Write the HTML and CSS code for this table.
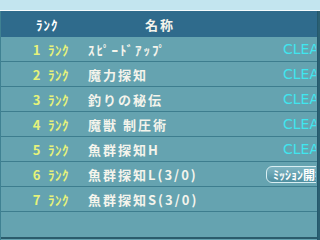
FILE: index.html
```html
<!DOCTYPE html>
<html lang="ja">
<head>
    <meta charset="UTF-8">
    <title>ランク一覧</title>
    <link rel="stylesheet" href="styles.css">
</head>
<body>

    <div id="rank-panel">
        <div class="top-strip"></div>

        <div class="rank-table">
            <div class="row head">
                <div class="col-rank">ﾗﾝｸ</div>
                <div class="col-name">名称</div>
                <div class="col-state"></div>
            </div>
            <div class="row">
                <div class="col-rank"><span class="num">1</span>ﾗﾝｸ</div>
                <div class="col-name">ｽﾋﾟｰﾄﾞｱｯﾌﾟ</div>
                <div class="col-state"><span class="clear">CLEAR</span></div>
            </div>
            <div class="row">
                <div class="col-rank"><span class="num">2</span>ﾗﾝｸ</div>
                <div class="col-name">魔力探知</div>
                <div class="col-state"><span class="clear">CLEAR</span></div>
            </div>
            <div class="row">
                <div class="col-rank"><span class="num">3</span>ﾗﾝｸ</div>
                <div class="col-name">釣りの秘伝</div>
                <div class="col-state"><span class="clear">CLEAR</span></div>
            </div>
            <div class="row">
                <div class="col-rank"><span class="num">4</span>ﾗﾝｸ</div>
                <div class="col-name">魔獣 制圧術</div>
                <div class="col-state"><span class="clear">CLEAR</span></div>
            </div>
            <div class="row">
                <div class="col-rank"><span class="num">5</span>ﾗﾝｸ</div>
                <div class="col-name">魚群探知H</div>
                <div class="col-state"><span class="clear">CLEAR</span></div>
            </div>
            <div class="row">
                <div class="col-rank"><span class="num">6</span>ﾗﾝｸ</div>
                <div class="col-name">魚群探知L(3/0)</div>
                <div class="col-state"><button class="mission">ﾐｯｼｮﾝ開始</button></div>
            </div>
            <div class="row">
                <div class="col-rank"><span class="num">7</span>ﾗﾝｸ</div>
                <div class="col-name">魚群探知S(3/0)</div>
                <div class="col-state"></div>
            </div>
            <div class="row empty"></div>
        </div>
    </div>

</body>
</html>
```

FILE: styles.css
```css
body {
    margin: 0;
    padding: 0;
    width: 320px;
    height: 240px;
    overflow: hidden;
    font-family: "Noto Sans CJK JP", "DejaVu Sans", sans-serif;
    font-size: 13px;
    font-weight: bold;
}

#rank-panel {
    width: 320px;
    height: 240px;
    background: #2b6072;
    display: flex;
    flex-direction: column;
}

.top-strip {
    height: 10px;
    background: #c3e5ef;
    border-bottom: 1px solid #f4fbfd;
}

.rank-table {
    flex: 1;
    width: 316px;
    border-left: 1px solid #3f8192;
    border-right: 1px solid #24586c;
    background: #65a3b0;
    overflow: hidden;
}

.row {
    display: grid;
    grid-template-columns: 68px 196px 51px;
    align-items: center;
    height: 24px;
    border-bottom: 1px solid #3d7d8e;
    white-space: nowrap;
}

.row.head {
    height: 26px;
    background: #2f6b8c;
    border-bottom: none;
    color: #ffffff;
}

.row.empty {
    height: 25px;
    border-bottom: 2px solid #2b5c6c;
}

.col-rank {
    text-align: right;
    color: #e6f27a;
    letter-spacing: 0.5px;
}

.head .col-rank {
    text-align: left;
    padding-left: 35px;
    color: #ffffff;
    letter-spacing: 1px;
}

.head .col-name {
    padding-left: 76px;
}

.num {
    margin-right: 7px;
}

.col-name {
    padding-left: 19px;
    color: #f4f4ec;
    letter-spacing: 2px;
}

.col-state {
    overflow: hidden;
}

.clear {
    display: block;
    padding-left: 18px;
    color: #3fe6ef;
    font-family: "DejaVu Sans", sans-serif;
    font-weight: normal;
    font-size: 14px;
}

.mission {
    margin-left: 1px;
    padding: 0 6px;
    height: 17px;
    border: 1px solid #d8eef2;
    border-radius: 6px;
    background: linear-gradient(#7fb5c2, #4f8fa0);
    color: #ffffff;
    font-family: inherit;
    font-size: 12px;
    font-weight: bold;
    line-height: 15px;
    white-space: nowrap;
}
```
